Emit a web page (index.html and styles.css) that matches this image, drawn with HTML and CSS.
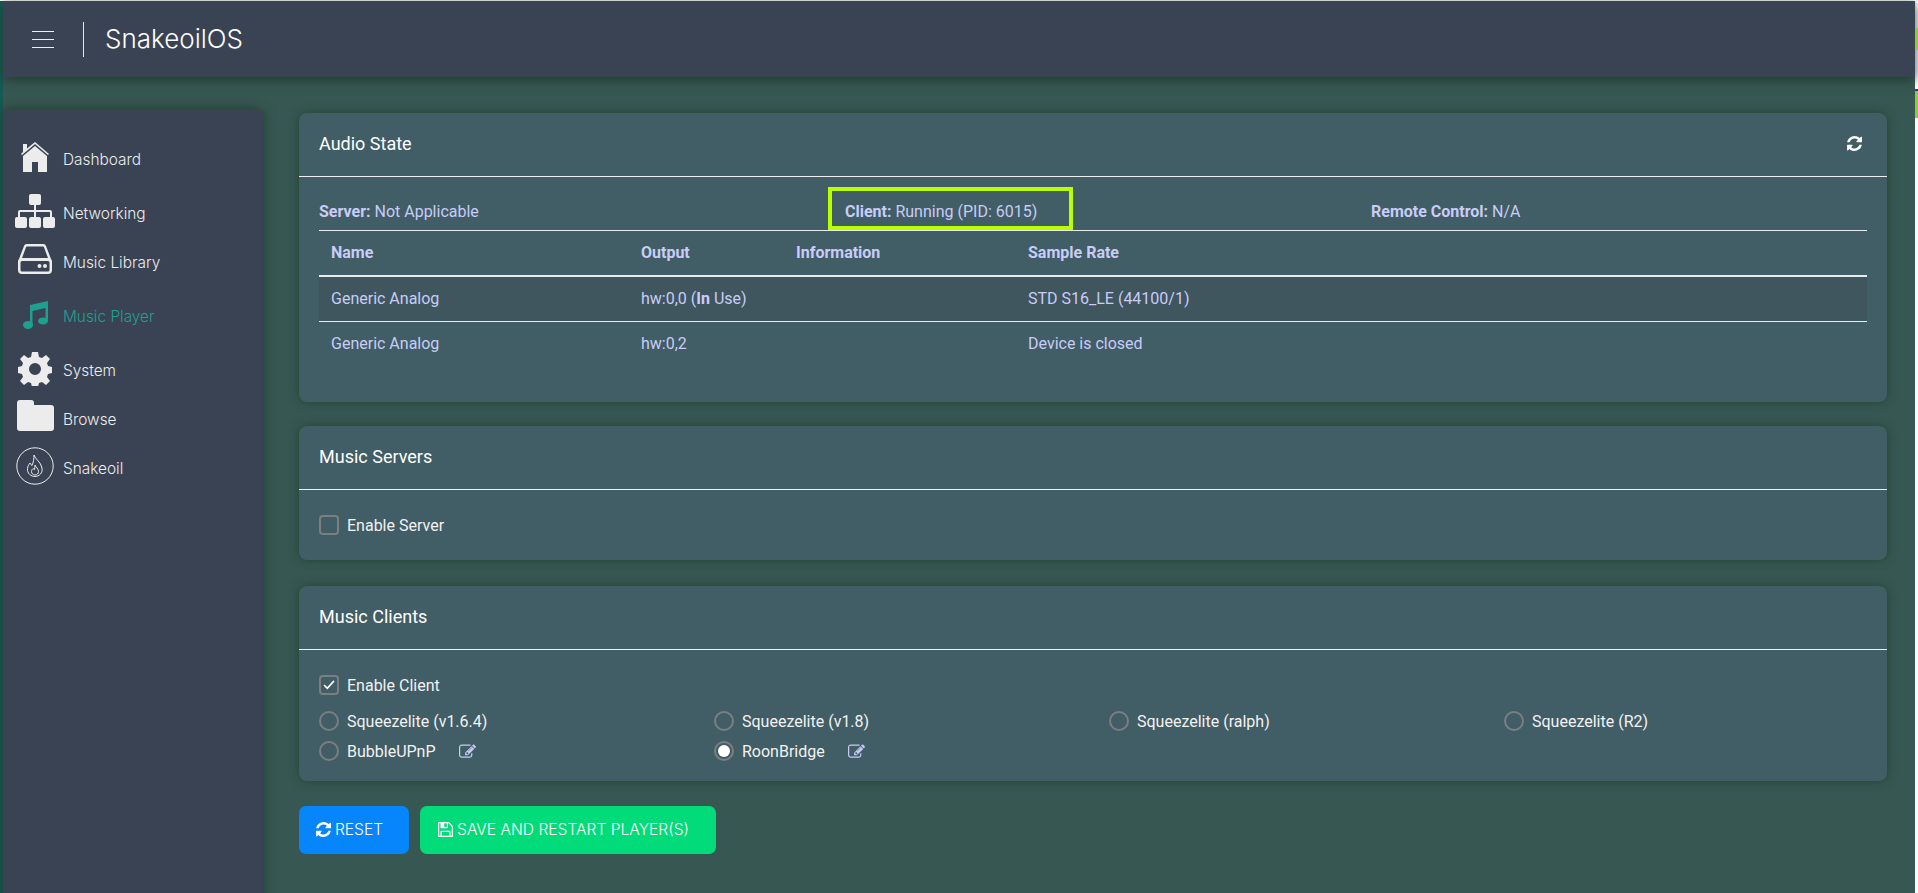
FILE: index.html
```html
<!DOCTYPE html>
<html lang="en">
<head>
    <meta charset="UTF-8">
    <title>SnakeoilOS</title>
    <link rel="stylesheet" href="styles.css">
</head>
<body>
    <div class="edge-left"></div>
    <div class="page">
        <header class="topbar">
            <button class="menu-toggle" aria-label="Menu"><span></span><span></span><span></span></button>
            <div class="brand">SnakeoilOS</div>
        </header>

        <div class="layout">
            <nav class="sidebar">
                <a class="nav-item nav-dashboard">
                    <svg class="nav-icon" viewBox="0 0 30 32"><path d="M15 1 L29 13 L28 14 L15 3 L2 14 L1 13 L3 11 L3 3 L7 3 L7 7.5Z"/><path d="M15 5 L27 15 L27 31 L18 31 L18 21 L12 21 L12 31 L3 31 L3 15Z"/></svg>
                    <span>Dashboard</span>
                </a>
                <a class="nav-item nav-network">
                    <svg class="nav-icon" viewBox="0 0 40 34"><rect x="14" y="0" width="12" height="11" rx="2"/><rect x="0" y="23" width="12" height="11" rx="2"/><rect x="14" y="23" width="12" height="11" rx="2"/><rect x="28" y="23" width="12" height="11" rx="2"/><path d="M19 11h2v5h14a2 2 0 0 1 2 2v5h-2v-5H21v5h-2v-5H5v5H3v-5a2 2 0 0 1 2-2h14z"/></svg>
                    <span>Networking</span>
                </a>
                <a class="nav-item nav-library">
                    <svg class="nav-icon" viewBox="0 0 34 30"><path d="M9 0h16a3 3 0 0 1 3 2l5 13a4 4 0 0 1 1 2v9a4 4 0 0 1-4 4H4a4 4 0 0 1-4-4v-9a4 4 0 0 1 1-2L6 2a3 3 0 0 1 3-2zm0 2.500a1 1 0 0 0-1 .7L4 14h26L26 3.200a1 1 0 0 0-1-.7zM4 17a1.500 1.500 0 0 0-1.500 1.500V26A1.500 1.500 0 0 0 4 27.500h26a1.500 1.500 0 0 0 1.500-1.500v-7.500A1.500 1.500 0 0 0 30 17z"/><circle cx="21.500" cy="22" r="2"/><circle cx="27" cy="22" r="2"/></svg>
                    <span>Music Library</span>
                </a>
                <a class="nav-item nav-player active">
                    <svg class="nav-icon" viewBox="0 0 26 28"><path d="M7 4 L25 0 V20 h-2.500 V7 L9.500 10 V24 h-2.500Z"/><ellipse cx="5" cy="24" rx="5" ry="4"/><ellipse cx="20" cy="20" rx="5" ry="3.500"/></svg>
                    <span>Music Player</span>
                </a>
                <a class="nav-item nav-system">
                    <svg class="nav-icon" viewBox="0 0 34 34"><path fill-rule="evenodd" d="M14 0h6l1 5 3 1 4-3 4 4-3 4 1 3 4 1v6l-4 1-1 3 3 4-4 4-4-3-3 1-1 4h-6l-1-4-3-1-4 3-4-4 3-4-1-3-4-1v-6l4-1 1-3-3-4 4-4 4 3 3-1zM17 11a6 6 0 1 0 0 12 6 6 0 0 0 0-12z"/></svg>
                    <span>System</span>
                </a>
                <a class="nav-item nav-browse">
                    <svg class="nav-icon" viewBox="0 0 37 31"><path d="M3 0h11a3 3 0 0 1 3 3v2h17a3 3 0 0 1 3 3v20a3 3 0 0 1-3 3H3a3 3 0 0 1-3-3V3a3 3 0 0 1 3-3z"/></svg>
                    <span>Browse</span>
                </a>
                <a class="nav-item nav-snakeoil">
                    <svg class="nav-icon outline" viewBox="0 0 38 38"><circle cx="19" cy="19" r="18.200"/><path d="M18 8c1 4 7 7 8 13 1 5-3 8.500-7 8.500s-8-3-7.500-8c.2-2.500 1.500-4 2.500-5.500.5 1 1 2 2 2.500 1.500-3 2-7 2-10.500z"/><path d="M19 18c.5 2 3.500 3.500 3.500 6.500 0 2-1.500 3.500-3.500 3.500s-3.500-1.500-3.500-3.500c0-1.500 1-2.500 1.500-3 .5.500 1 1 1.500 1 .5-1.500.5-3 .5-4.500z"/></svg>
                    <span>Snakeoil</span>
                </a>
            </nav>

            <main class="content">
                <section class="card card-audio">
                    <div class="card-header">
                        <h2>Audio State</h2>
                        <svg class="refresh-icon" viewBox="0 0 1536 1536"><path d="M1511 928q0 5-1 7-64 268-268 434.500T764 1536q-146 0-282.500-55T238 1324l-129 129q-19 19-45 19t-45-19-19-45V960q0-26 19-45t45-19h448q26 0 45 19t19 45-19 45l-137 137q71 66 161 102t187 36q134 0 250-65t186-179q11-17 53-117 8-23 30-23h192q13 0 22.500 9.500T1511 928zm25-800v448q0 26-19 45t-45 19h-448q-26 0-45-19t-19-45 19-45l138-138Q969 256 768 256q-134 0-250 65T332 500q-11 17-53 117-8 23-30 23H50q-13 0-22.500-9.500T18 608v-7q65-268 270-434.500T768 0q146 0 284 55.500T1297 212l130-129q19-19 45-19t45 19 19 45z"/></svg>
                    </div>
                    <div class="card-body">
                        <div class="state-row">
                            <div class="state-cell state-server"><b>Server:</b> Not Applicable</div>
                            <div class="state-client"><span class="highlight"><b>Client:</b> Running (PID: 6015)</span></div>
                            <div class="state-cell"><b>Remote Control:</b> N/A</div>
                        </div>
                        <table class="device-table">
                            <thead>
                                <tr><th class="col-name">Name</th><th class="col-output">Output</th><th class="col-info">Information</th><th>Sample Rate</th></tr>
                            </thead>
                            <tbody>
                                <tr class="striped"><td>Generic Analog</td><td>hw:0,0 (<b>In</b> Use)</td><td></td><td>STD S16_LE (44100/1)</td></tr>
                                <tr><td>Generic Analog</td><td>hw:0,2</td><td></td><td>Device is closed</td></tr>
                            </tbody>
                        </table>
                    </div>
                </section>

                <section class="card card-servers">
                    <div class="card-header"><h2>Music Servers</h2></div>
                    <div class="card-body">
                        <label class="check"><span class="box"></span>Enable Server</label>
                    </div>
                </section>

                <section class="card card-clients">
                    <div class="card-header"><h2>Music Clients</h2></div>
                    <div class="card-body">
                        <label class="check"><span class="box"><svg viewBox="0 0 14 12"><path d="M1 6l4 4 8-9"/></svg></span>Enable Client</label>
                        <div class="radio-grid">
                            <label class="radio"><span class="dot"></span>Squeezelite (v1.6.4)</label>
                            <label class="radio"><span class="dot"></span>Squeezelite (v1.8)</label>
                            <label class="radio"><span class="dot"></span>Squeezelite (ralph)</label>
                            <label class="radio"><span class="dot"></span>Squeezelite (R2)</label>
                            <label class="radio"><span class="dot"></span>BubbleUPnP
                                <svg class="edit-icon" viewBox="0 0 1792 1536"><path d="M888 1184l116-116-152-152-116 116v56h96v96h56zm440-720q-16-16-33 1L945 815q-17 17-1 33t33-1l350-350q17-17 1-33zm80 594v190q0 119-84.500 203.500T1120 1536H288q-119 0-203.500-84.500T0 1248V416q0-119 84.500-203.500T288 128h832q63 0 117 25 15 7 18 23 3 17-9 29l-49 49q-14 14-32 8-23-6-45-6H288q-66 0-113 47t-47 113v832q0 66 47 113t113 47h832q66 0 113-47t47-113v-126q0-13 9-22l64-64q15-15 35-7t20 29zm-96-738l288 288-672 672H640V992zm444 132l-92 92-288-288 92-92q28-28 68-28t68 28l152 152q28 28 28 68t-28 68z"/></svg>
                            </label>
                            <label class="radio"><span class="dot selected"></span>RoonBridge
                                <svg class="edit-icon" viewBox="0 0 1792 1536"><path d="M888 1184l116-116-152-152-116 116v56h96v96h56zm440-720q-16-16-33 1L945 815q-17 17-1 33t33-1l350-350q17-17 1-33zm80 594v190q0 119-84.500 203.500T1120 1536H288q-119 0-203.500-84.500T0 1248V416q0-119 84.500-203.500T288 128h832q63 0 117 25 15 7 18 23 3 17-9 29l-49 49q-14 14-32 8-23-6-45-6H288q-66 0-113 47t-47 113v832q0 66 47 113t113 47h832q66 0 113-47t47-113v-126q0-13 9-22l64-64q15-15 35-7t20 29zm-96-738l288 288-672 672H640V992zm444 132l-92 92-288-288 92-92q28-28 68-28t68 28l152 152q28 28 28 68t-28 68z"/></svg>
                            </label>
                        </div>
                    </div>
                </section>

                <div class="actions">
                    <button class="btn btn-reset">
                        <svg viewBox="0 0 1536 1536"><path d="M1511 928q0 5-1 7-64 268-268 434.500T764 1536q-146 0-282.500-55T238 1324l-129 129q-19 19-45 19t-45-19-19-45V960q0-26 19-45t45-19h448q26 0 45 19t19 45-19 45l-137 137q71 66 161 102t187 36q134 0 250-65t186-179q11-17 53-117 8-23 30-23h192q13 0 22.500 9.500T1511 928zm25-800v448q0 26-19 45t-45 19h-448q-26 0-45-19t-19-45 19-45l138-138Q969 256 768 256q-134 0-250 65T332 500q-11 17-53 117-8 23-30 23H50q-13 0-22.500-9.500T18 608v-7q65-268 270-434.500T768 0q146 0 284 55.500T1297 212l130-129q19-19 45-19t45 19 19 45z"/></svg>
                        RESET
                    </button>
                    <button class="btn btn-save">
                        <svg viewBox="0 0 1536 1536"><path d="M384 1408h768v-384H384v384zm896 0h128V512q0-14-10-38.500t-20-34.500l-281-281q-10-10-34-20t-39-10v416q0 40-28 68t-68 28H352q-40 0-68-28t-28-68V128H128v1280h128V992q0-40 28-68t68-28h832q40 0 68 28t28 68v416zM896 480V160q0-13-9.500-22.500T864 128H672q-13 0-22.500 9.500T640 160v320q0 13 9.500 22.500T672 512h192q13 0 22.500-9.500T896 480zm640 32v928q0 40-28 68t-68 28H96q-40 0-68-28t-28-68V96q0-40 28-68T96 0h928q40 0 88 20t76 48l280 280q28 28 48 76t20 88z"/></svg>
                        SAVE AND RESTART PLAYER(S)
                    </button>
                </div>
            </main>
        </div>
    </div>
    <div class="edge-right">
        <i class="edge-mark mark-top"></i>
        <i class="edge-mark mark-bottom"></i>
    </div>
</body>
</html>
```

FILE: styles.css
```css
* {
    box-sizing: border-box;
}
html, body {
    height: 100%;
}
body {
    display: flex;
    margin: 0;
    padding-top: 1px;
    background-color: #fff;
    font-family: Roboto, 'Liberation Sans', sans-serif;
    font-size: 16px;
    color: #c8ccf6;
    overflow: hidden;
}
.edge-left {
    flex: 0 0 3px;
    background-color: #175a55;
}
.edge-right {
    position: relative;
    flex: 0 0 3px;
}
.edge-mark {
    position: absolute;
    left: 0;
    width: 3px;
    background-color: #8ccb3f;
}
.mark-top {
    top: 27px;
    height: 22px;
}
.mark-bottom {
    top: 88px;
    height: 29px;
    border-top: 2px solid #3a4354;
}
.page {
    flex: 0 0 1912px;
    background-color: #375752;
}
.topbar {
    display: flex;
    align-items: center;
    height: 76px;
    padding-left: 29px;
    background-color: #3a4354;
    box-shadow: 0 3px 10px rgba(30, 60, 40, 0.9);
}
.menu-toggle {
    display: flex;
    flex-direction: column;
    justify-content: space-between;
    width: 22px;
    height: 17px;
    margin-right: 29px;
    padding: 0;
    background: none;
    border: none;
}
.menu-toggle span {
    display: block;
    height: 1px;
    background-color: #f0f0f0;
}
.brand {
    height: 35px;
    padding-left: 21px;
    border-left: 1px solid #e8e8e8;
    color: #fff;
    font-family: Inter, Roboto, sans-serif;
    font-size: 26px;
    font-weight: 300;
    line-height: 33px;
}
.layout {
    display: flex;
    height: 816px;
    padding-top: 32px;
}
.sidebar {
    flex: 0 0 260px;
    height: 800px;
    padding-top: 30px;
    background-color: #3a4354;
    border-radius: 0 8px 0 0;
    box-shadow: 0 0 12px rgba(30, 60, 40, 0.9);
}
.nav-item {
    position: relative;
    display: flex;
    align-items: center;
    height: 40px;
    margin-top: 14px;
    padding-left: 60px;
    color: #ececec;
    font-family: Inter, Roboto, sans-serif;
    font-size: 15.4px;
    font-weight: 300;
}
.nav-icon {
    position: absolute;
    fill: #ececec;
}
.nav-item.active {
    color: #1ea08f;
}
.nav-item.active .nav-icon {
    fill: #1ea08f;
}
.nav-dashboard {
    margin-top: 0;
}
.nav-dashboard .nav-icon {
    left: 17px;
    top: 2px;
    width: 30px;
    height: 32px;
}
.nav-network .nav-icon {
    left: 12px;
    top: 1px;
    width: 40px;
    height: 34px;
}
.nav-library {
    margin-top: 9px;
}
.nav-library .nav-icon {
    left: 15px;
    top: 2px;
    width: 34px;
    height: 30px;
}
.nav-player .nav-icon {
    left: 20px;
    top: 5px;
    width: 26px;
    height: 28px;
}
.nav-system .nav-icon {
    left: 15px;
    top: 2px;
    width: 34px;
    height: 34px;
}
.nav-browse {
    margin-top: 9px;
}
.nav-browse .nav-icon {
    left: 14px;
    top: 1px;
    width: 37px;
    height: 31px;
}
.nav-snakeoil {
    margin-top: 9px;
}
.nav-snakeoil .nav-icon {
    left: 13px;
    top: -1px;
    width: 38px;
    height: 38px;
}
.nav-icon.outline {
    fill: none;
    stroke: #ececec;
    stroke-width: 1;
}
.content {
    flex: 1;
    display: flex;
    flex-direction: column;
    padding: 4px 28px 0 36px;
}
.card {
    background-color: #415d65;
    border-radius: 8px;
    box-shadow: 0 0 10px rgba(30, 60, 40, 0.75);
}
.card-header {
    display: flex;
    align-items: center;
    justify-content: space-between;
    height: 64px;
    padding: 0 25px 2px 20px;
    border-bottom: 1px solid #f0f0f0;
}
.card-header h2 {
    margin: 0;
    color: #fff;
    font-size: 18px;
    font-weight: 400;
}
.refresh-icon {
    width: 15px;
    height: 15px;
    fill: #fff;
}
.card-body {
    padding: 0 20px;
}
.card-audio {
    height: 289px;
}
.card-servers {
    height: 134px;
    margin-top: 24px;
}
.card-clients {
    height: 195px;
    margin-top: 26px;
}
.state-row {
    display: flex;
    align-items: flex-end;
    height: 54px;
    border-bottom: 1px solid #e8ecec;
}
.state-cell {
    height: 26px;
    margin-bottom: 5px;
    line-height: 26px;
}
.state-server {
    width: 509px;
}
.state-client {
    width: 543px;
}
.highlight {
    display: block;
    width: 245px;
    height: 43px;
    padding: 11px 0 0 13px;
    border: 4px solid #b9ff00;
    line-height: 20px;
    white-space: nowrap;
}
.device-table {
    width: 100%;
    border-collapse: collapse;
}
.device-table th, .device-table td {
    height: 45px;
    padding: 0 0 0 12px;
    text-align: left;
}
.device-table th {
    padding-bottom: 2px;
    border-bottom: 2px solid #e8ecec;
    font-weight: 700;
}
.col-name {
    width: 310px;
}
.col-output {
    width: 155px;
}
.col-info {
    width: 232px;
}
.device-table tr.striped td {
    background-color: #3f565f;
    border-bottom: 1px solid #e8ecec;
}
.check, .radio {
    display: flex;
    align-items: center;
    color: #f2f2f2;
}
.check {
    width: 200px;
    height: 24px;
    margin-top: 23px;
}
.box {
    display: flex;
    align-items: center;
    justify-content: center;
    width: 20px;
    height: 20px;
    margin-right: 8px;
    border: 2px solid #7b7f82;
    border-radius: 4px;
}
.box svg {
    width: 12px;
    height: 10px;
    fill: none;
    stroke: #fff;
    stroke-width: 2;
}
.radio-grid {
    display: grid;
    grid-template-columns: 395px 395px 395px 1fr;
    grid-auto-rows: 30px;
    margin-top: 9px;
}
.dot {
    position: relative;
    width: 20px;
    height: 20px;
    margin-right: 8px;
    border: 2px solid #7b7f82;
    border-radius: 50%;
}
.dot.selected::after {
    content: '';
    position: absolute;
    left: 2px;
    top: 2px;
    width: 12px;
    height: 12px;
    border-radius: 50%;
    background-color: #fff;
}
.edit-icon {
    width: 17px;
    height: 15px;
    margin-left: 23px;
    margin-top: -2px;
    fill: #c8ccf6;
}
.actions {
    display: flex;
    gap: 11px;
    margin-top: 25px;
}
.btn {
    display: flex;
    align-items: center;
    justify-content: center;
    gap: 4px;
    height: 48px;
    padding: 0 9px 2px 0;
    border: none;
    border-radius: 7px;
    color: #fff;
    font-family: Inter, Roboto, sans-serif;
    font-size: 15.6px;
    font-weight: 300;
}
.btn svg {
    width: 15px;
    height: 15px;
    fill: #fff;
}
.btn-reset {
    width: 110px;
    background-color: #0785fb;
}
.btn-save {
    width: 296px;
    background-color: #02db79;
}
```
